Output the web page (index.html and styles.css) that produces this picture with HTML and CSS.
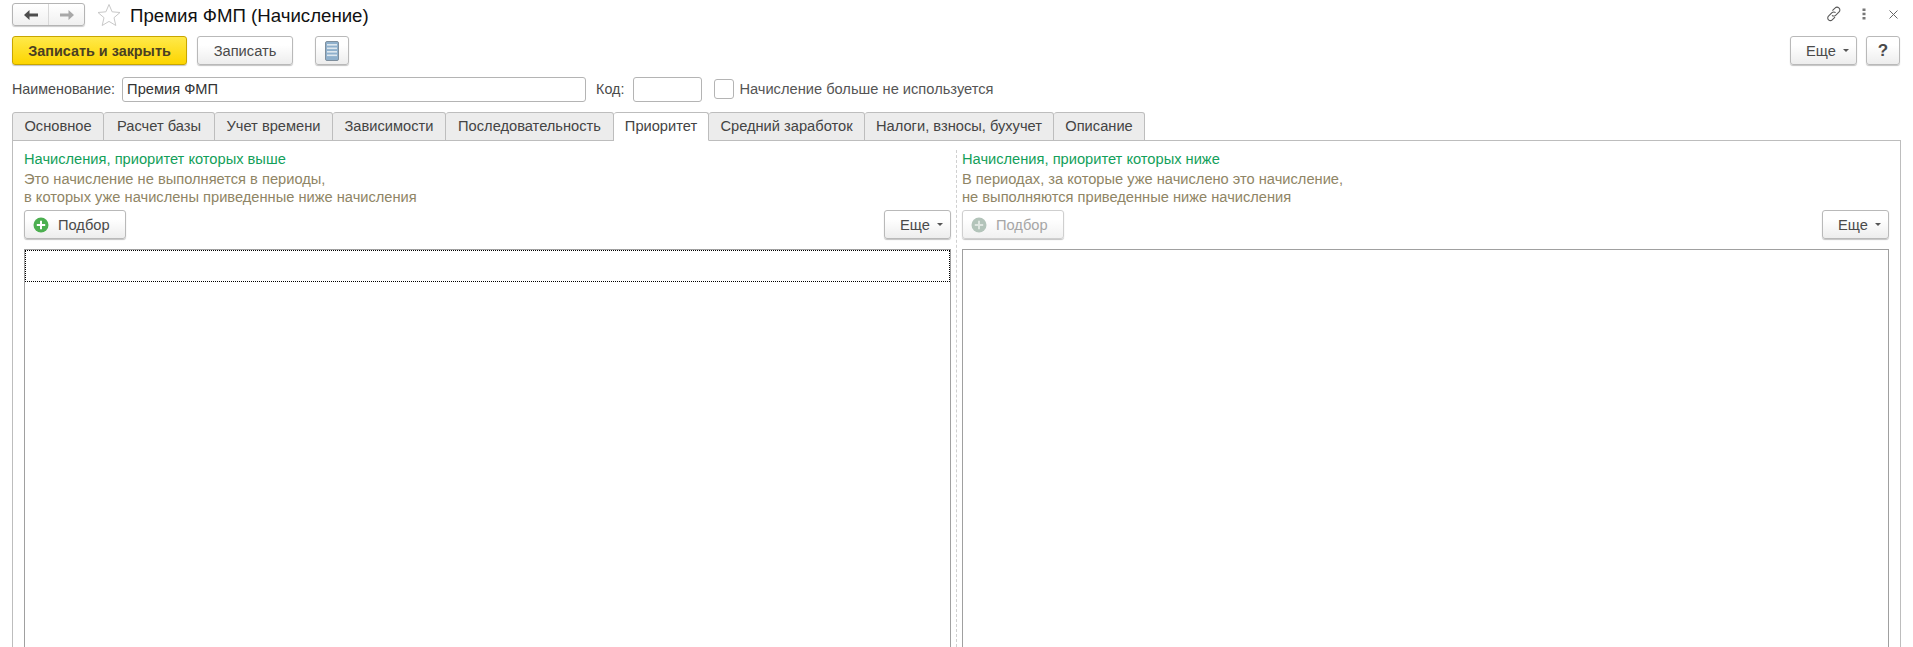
FILE: index.html
```html
<!DOCTYPE html>
<html lang="ru">
<head>
<meta charset="utf-8">
<title>Премия ФМП (Начисление)</title>
<link rel="stylesheet" href="styles.css">
</head>
<body>
<div class="page">
  <header class="titlebar">
    <div class="nav">
      <button class="nav-btn nav-left" type="button">
        <svg width="16" height="12" viewBox="0 0 16 12"><path d="M1 6 6.5 1v3.4H15v3.2H6.5V11z" fill="#4d4d4d"/></svg>
      </button>
      <button class="nav-btn" type="button">
        <svg width="16" height="12" viewBox="0 0 16 12"><path d="M15 6 9.500 1v3.400H1v3.200h8.500V11z" fill="#a8a8a8"/></svg>
      </button>
    </div>
    <svg class="star" width="24" height="24" viewBox="0 0 24 24"><path d="M12 1.500l3.100 7.300 7.900.7-6 5.200 1.800 7.800L12 18.400l-6.800 4.100L7 14.700 1 9.500l7.900-.7z" fill="#fff" stroke="#c8c8c8" stroke-width="1"/></svg>
    <h1 class="title">Премия ФМП (Начисление)</h1>
    <div class="window-tools">
      <svg class="tool-link" width="16" height="16" viewBox="0 0 16 16" fill="none" stroke="#5a5a5a" stroke-width="1.100"><path d="M6.400 4.600 9.200 1.900a2.500 2.500 0 0 1 3.600 0l.3.300a2.500 2.500 0 0 1 0 3.600L9.600 9.300a2.500 2.500 0 0 1-3.600 0"/><path d="M9.600 6.700a2.500 2.500 0 0 0-3.600 0L2.500 10.200a2.500 2.500 0 0 0 0 3.600l.1.100a2.500 2.500 0 0 0 3.600 0l2.800-2.700"/></svg>
      <svg class="tool-more" width="4" height="12" viewBox="0 0 4 12"><g fill="#777"><rect x="0.500" y="0.500" width="3" height="2.500"/><rect x="0.500" y="4.700" width="3" height="2.500"/><rect x="0.500" y="9" width="3" height="2.500"/></g></svg>
      <svg class="tool-close" width="9" height="9" viewBox="0 0 9 9"><path d="M.5.500l8 8M8.500.500l-8 8" stroke="#666" stroke-width="1"/></svg>
    </div>
  </header>

  <div class="toolbar">
    <button class="btn btn-primary" type="button">Записать и закрыть</button>
    <button class="btn btn-save" type="button">Записать</button>
    <button class="btn btn-icon" type="button">
      <svg width="14" height="20" viewBox="0 0 14 20"><rect x="0.500" y="0.500" width="13" height="19" rx="1.500" fill="#8fb0cc" stroke="#7f8f9d"/><g fill="#dfe8ef"><rect x="2" y="3" width="10" height="1.600"/><rect x="2" y="6.500" width="10" height="1.600"/><rect x="2" y="10" width="10" height="1.600"/><rect x="2" y="13.500" width="10" height="1.600"/></g></svg>
    </button>
    <div class="toolbar-right">
      <button class="btn btn-more" type="button">Еще<span class="caret"></span></button>
      <button class="btn btn-help" type="button">?</button>
    </div>
  </div>

  <div class="fields">
    <label class="field-label">Наименование:</label>
    <div class="input input-name">Премия ФМП</div>
    <label class="field-label label-code">Код:</label>
    <div class="input input-code"></div>
    <span class="checkbox"></span>
    <span class="check-label">Начисление больше не используется</span>
  </div>

  <nav class="tabs">
    <div class="tab tab-1">Основное</div>
    <div class="tab tab-2">Расчет базы</div>
    <div class="tab tab-3">Учет времени</div>
    <div class="tab tab-4">Зависимости</div>
    <div class="tab tab-5">Последовательность</div>
    <div class="tab tab-active">Приоритет</div>
    <div class="tab tab-7">Средний заработок</div>
    <div class="tab tab-8">Налоги, взносы, бухучет</div>
    <div class="tab tab-9">Описание</div>
  </nav>

  <main class="panel">
    <section class="col">
      <div class="heading">Начисления, приоритет которых выше</div>
      <div class="desc">Это начисление не выполняется в периоды,<br>в которых уже начислены приведенные ниже начисления</div>
      <div class="col-bar">
        <button class="btn btn-pick" type="button">
          <svg width="16" height="16" viewBox="0 0 16 16"><circle cx="8" cy="8" r="7.500" fill="#4caf50"/><path d="M8 3.800v8.400M3.800 8h8.400" stroke="#fff" stroke-width="2"/></svg>
          Подбор
        </button>
        <button class="btn btn-more" type="button">Еще<span class="caret"></span></button>
      </div>
      <div class="table"><div class="row-focus"></div></div>
    </section>
    <div class="splitter"></div>
    <section class="col">
      <div class="heading">Начисления, приоритет которых ниже</div>
      <div class="desc">В периодах, за которые уже начислено это начисление,<br>не выполняются приведенные ниже начисления</div>
      <div class="col-bar">
        <button class="btn btn-pick btn-disabled" type="button">
          <svg width="16" height="16" viewBox="0 0 16 16"><circle cx="8" cy="8" r="7.500" fill="#b3c4ba"/><path d="M8 3.800v8.400M3.800 8h8.400" stroke="#dfe6e1" stroke-width="2"/></svg>
          Подбор
        </button>
        <button class="btn btn-more" type="button">Еще<span class="caret"></span></button>
      </div>
      <div class="table"></div>
    </section>
  </main>
</div>
</body>
</html>
```

FILE: styles.css
```css
* { box-sizing: border-box; }
html, body { margin: 0; height: 100%; overflow: hidden; background: #fff; }
body { font-family: "Liberation Sans", Arial, sans-serif; font-size: 14.67px; color: #4a4a4a; }
.page { height: 647px; padding: 0 12px; display: flex; flex-direction: column; overflow: hidden; }

.titlebar { height: 36px; padding-top: 3px; display: flex; align-items: flex-start; flex: none; }
.nav { display: flex; width: 73px; height: 23px; border: 1px solid #b4b4b4; border-radius: 3px; background: linear-gradient(#fff, #f0f0f0); box-shadow: 0 1px 1px #ccc; }
.nav-btn { flex: 1; padding: 0; border: 0; background: none; display: flex; align-items: center; justify-content: center; }
.nav-left { border-right: 1px solid #d8d8d8; }
.star { margin-left: 12px; flex: none; }
.title { margin: 0 0 0 9px; font-size: 18.67px; line-height: 25px; font-weight: 400; color: #111; }
.window-tools { margin-left: auto; height: 22px; padding-right: 3px; display: flex; align-items: center; }
.tool-more { margin-left: 20px; }
.tool-close { margin-left: 23px; }

.toolbar { height: 41px; display: flex; align-items: flex-start; flex: none; }
.btn { height: 29px; padding: 0; border: 1px solid #b9b9b9; border-radius: 3px; background: linear-gradient(#fff 30%, #ededed); box-shadow: 0 1px 1px #c4c4c4; font: 14.67px "Liberation Sans", Arial, sans-serif; color: #4a4a4a; display: inline-flex; align-items: center; justify-content: center; flex: none; }
.btn-primary { width: 175px; border-color: #c8a600; background: linear-gradient(#ffe94a, #fdd500); font-size: 14.4px; font-weight: 700; color: #4a4022; }
.btn-save { width: 96px; margin-left: 10px; }
.btn-icon { width: 34px; margin-left: 22px; }
.toolbar-right { margin-left: auto; display: flex; gap: 9px; padding-right: 1px; }
.btn-more { width: 67px; padding-left: 8px; }
.btn-help { width: 34px; font-weight: 700; font-size: 17px; }
.caret { width: 0; height: 0; margin-left: 7px; border: 3px solid transparent; border-top: 3px solid #555; border-bottom: 0; }

.fields { height: 35px; display: flex; align-items: flex-start; flex: none; }
.field-label { font-size: 14.3px; line-height: 24px; color: #4a4a4a; }
.input { height: 25px; border: 1px solid #b4b4b4; border-radius: 3px; background: #fff; line-height: 23px; padding-left: 4px; color: #333; }
.input-name { width: 464px; margin-left: 7px; }
.label-code { margin-left: 10px; }
.input-code { width: 69px; margin-left: 9px; }
.checkbox { width: 20px; height: 20px; margin: 2px 0 0 12px; border: 1px solid #b4b4b4; border-radius: 3px; }
.check-label { margin-left: 5px; line-height: 24px; color: #555; }

.tabs { height: 29px; display: flex; flex: none; position: relative; z-index: 1; }
.tab { height: 29px; border: 1px solid #bdbdbd; border-left-width: 0; border-radius: 3px 3px 0 0; background: #ececec; line-height: 27px; text-align: center; color: #444; }
.tab-1 { width: 92px; border-left-width: 1px; }
.tab-2 { width: 111px; }
.tab-3 { width: 118px; }
.tab-4 { width: 113px; }
.tab-5 { width: 168px; }
.tab-active { width: 95px; background: #fff; border-bottom-color: #fff; }
.tab-7 { width: 156px; }
.tab-8 { width: 189px; }
.tab-9 { width: 91px; }

.panel { flex: 1; min-height: 0; width: 1889px; margin-top: -1px; padding: 0 11px; display: flex; border: 1px solid #bdbdbd; border-bottom: 0; }
.col { flex: none; width: 927px; padding-top: 9px; display: flex; flex-direction: column; min-height: 0; }
.heading { line-height: 18px; color: #13a05a; }
.desc { margin-top: 2px; line-height: 18px; color: #8f8565; }
.col-bar { margin-top: 4px; display: flex; justify-content: space-between; flex: none; }
.btn-pick { width: 102px; gap: 9px; justify-content: flex-start; padding-left: 8px; }
.btn-disabled { color: #a6a6a6; background: linear-gradient(#fff 30%, #f1f1f1); border-color: #cfcfcf; }
.table { flex: 1; margin-top: 10px; border: 1px solid #a0a0a0; border-bottom: 0; min-height: 0; padding: 0; }
.row-focus { height: 32px; border: 1px dotted #000; }
.splitter { flex: none; width: 1px; margin: 9px 5px 0 5px; border-left: 1px dashed #d0d0d0; }
```
